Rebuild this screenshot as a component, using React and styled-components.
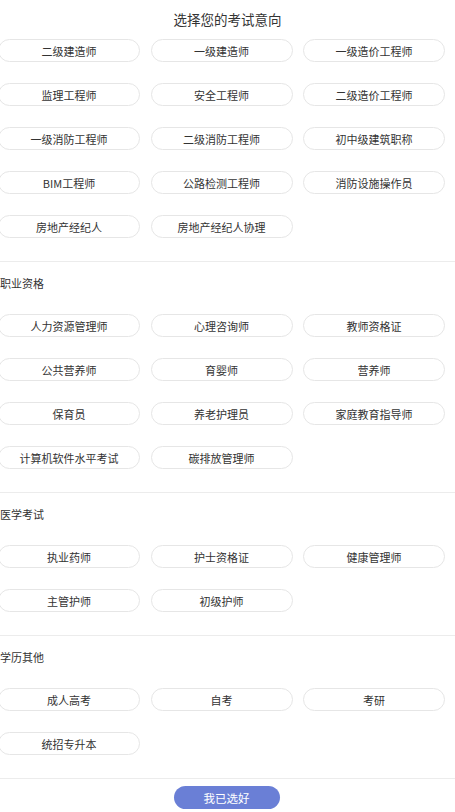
import React from "react";
import styled, { createGlobalStyle } from "styled-components";

const GlobalStyle = createGlobalStyle`
  html, body { margin: 0; padding: 0; background: #fff; }
  body {
    font-family: "Noto Sans CJK SC", "Noto Sans", sans-serif;
    color: #333;
    overflow: hidden;
  }
  * { box-sizing: border-box; }
`;

const Page = styled.div`
  width: 455px;
  height: 812px;
  display: flex;
  flex-direction: column;
  overflow: hidden;
`;

const Header = styled.div`
  height: 39px;
  line-height: 38px;
  text-align: center;
  font-size: 13.5px;
  color: #333;
`;

const Section = styled.div`
  padding-bottom: 23px;
  border-bottom: 1px solid #ececec;
`;

const SectionTitle = styled.div`
  height: 52px;
  padding-top: 13px;
  font-size: 11px;
  line-height: 16px;
  color: #333;
`;

const Grid = styled.div`
  display: grid;
  grid-template-columns: repeat(3, 142px);
  column-gap: 10.5px;
  row-gap: 21px;
  margin-left: -2px;
`;

const Chip = styled.div`
  height: 23px;
  border: 1px solid #e6e6e6;
  border-radius: 12px;
  display: flex;
  align-items: center;
  justify-content: center;
  font-size: 11px;
  color: #333;
  white-space: nowrap;
`;

const Footer = styled.div`
  padding-top: 7px;
  display: flex;
  justify-content: center;
`;

const SubmitButton = styled.button`
  width: 106px;
  height: 23px;
  border: none;
  border-radius: 12px;
  background: #6a7fd6;
  color: #fff;
  font-family: inherit;
  font-size: 11.5px;
  padding: 0;
  margin-left: -2px;
`;

const sections = [
  {
    title: null,
    items: [
      "二级建造师", "一级建造师", "一级造价工程师",
      "监理工程师", "安全工程师", "二级造价工程师",
      "一级消防工程师", "二级消防工程师", "初中级建筑职称",
      "BIM工程师", "公路检测工程师", "消防设施操作员",
      "房地产经纪人", "房地产经纪人协理",
    ],
  },
  {
    title: "职业资格",
    items: [
      "人力资源管理师", "心理咨询师", "教师资格证",
      "公共营养师", "育婴师", "营养师",
      "保育员", "养老护理员", "家庭教育指导师",
      "计算机软件水平考试", "碳排放管理师",
    ],
  },
  {
    title: "医学考试",
    items: ["执业药师", "护士资格证", "健康管理师", "主管护师", "初级护师"],
  },
  {
    title: "学历其他",
    items: ["成人高考", "自考", "考研", "统招专升本"],
  },
];

export default function App() {
  return (
    <Page>
      <GlobalStyle />
      <Header>选择您的考试意向</Header>
      {sections.map((s, i) => (
        <Section key={i}>
          {s.title && <SectionTitle>{s.title}</SectionTitle>}
          <Grid>
            {s.items.map((it) => (
              <Chip key={it}>{it}</Chip>
            ))}
          </Grid>
        </Section>
      ))}
      <Footer>
        <SubmitButton>我已选好</SubmitButton>
      </Footer>
    </Page>
  );
}
